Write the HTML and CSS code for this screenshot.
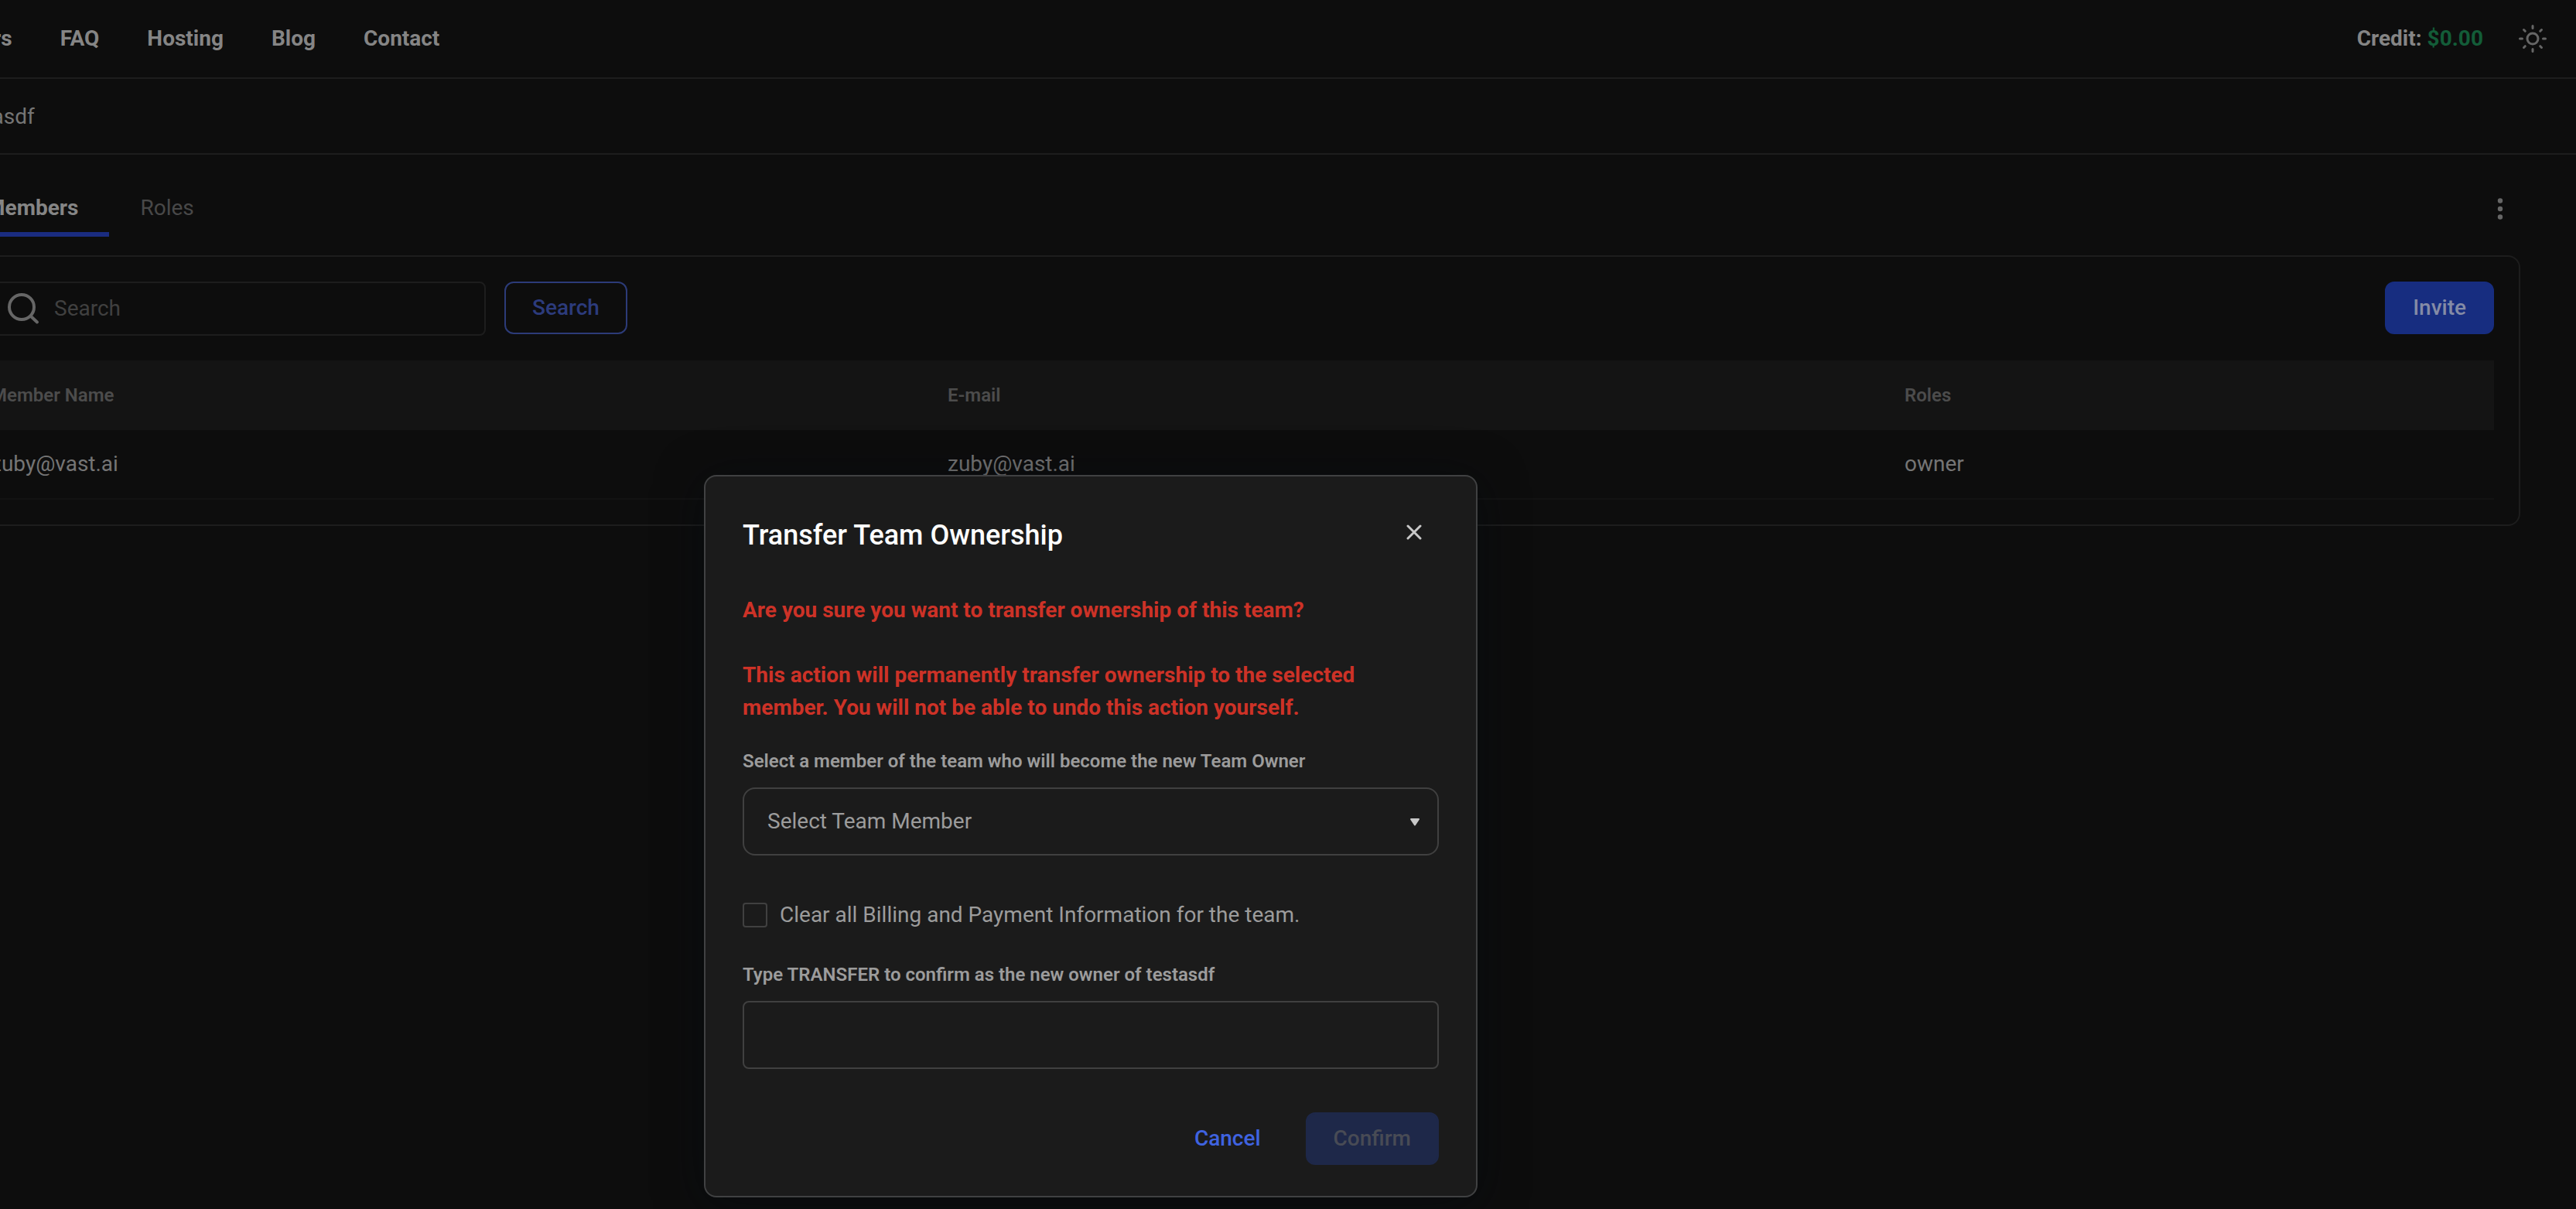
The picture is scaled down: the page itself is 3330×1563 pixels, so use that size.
FILE: index.html
```html
<!DOCTYPE html>
<html lang="en">
<head>
    <meta charset="UTF-8">
    <meta name="viewport" content="width=device-width, initial-scale=1.0">
    <title>Team Members</title>
    <link rel="stylesheet" href="styles.css">
</head>
<body>
<!-- Top bar -->
<header class="topbar">
    <nav class="nav">
        <a href="#">rs</a>
        <a href="#">FAQ</a>
        <a href="#">Hosting</a>
        <a href="#">Blog</a>
        <a href="#">Contact</a>
    </nav>
    <div class="account">
        <p class="credit">Credit: <span class="amount">$0.00</span></p>
        <button type="button" class="icon-button" aria-label="Toggle theme">
            <svg width="36" height="36" viewBox="0 0 36 36" fill="none" stroke="currentColor" stroke-width="3" stroke-linecap="round">
                <circle cx="18" cy="18" r="7"/>
                <path d="M18 1.500V4.500M18 31.500V34.500M1.500 18H4.500M31.500 18H34.500M6.500 6.500L8.300 8.300M27.700 27.700L29.500 29.500M6.500 29.500L8.300 27.700M27.700 8.300L29.500 6.500"/>
            </svg>
        </button>
    </div>
</header>

<div class="breadcrumb"><span>testasdf</span></div>

<main class="content">
    <div class="tabs-row">
        <div class="tabs">
            <a href="#" class="tab active">Members</a>
            <a href="#" class="tab">Roles</a>
        </div>
        <button type="button" class="icon-button" aria-label="More options">
            <svg width="52" height="28" viewBox="0 0 52 28" fill="currentColor">
                <circle cx="26" cy="3.500" r="3.200"/>
                <circle cx="26" cy="14" r="3.200"/>
                <circle cx="26" cy="24.500" r="3.200"/>
            </svg>
        </button>
    </div>

    <section class="card">
        <form class="toolbar">
            <label class="search-box">
                <svg width="44" height="44" viewBox="0 0 44 44" fill="none" stroke="currentColor" stroke-width="4" stroke-linecap="round">
                    <circle cx="20" cy="20" r="16"/>
                    <path d="M32 32L40 39.500"/>
                </svg>
                <input type="text" placeholder="Search" aria-label="Search members">
            </label>
            <button type="button" class="btn btn-outline">Search</button>
            <button type="button" class="btn btn-primary">Invite</button>
        </form>

        <table class="members">
            <tr>
                <th>Member Name</th>
                <th>E-mail</th>
                <th>Roles</th>
            </tr>
            <tr>
                <td>zuby@vast.ai</td>
                <td>zuby@vast.ai</td>
                <td>owner</td>
            </tr>
        </table>
    </section>
</main>

<!-- Transfer ownership dialog -->
<div class="overlay">
    <form class="modal" role="dialog" aria-labelledby="modalTitle">
        <div class="modal-header">
            <h2 id="modalTitle">Transfer Team Ownership</h2>
            <button type="button" class="icon-button close" aria-label="Close">
                <svg width="20" height="20" viewBox="0 0 20 20" fill="none" stroke="currentColor" stroke-width="3" stroke-linecap="round">
                    <path d="M2 2L18 18M18 2L2 18"/>
                </svg>
            </button>
        </div>

        <p class="warning">Are you sure you want to transfer ownership of this team?</p>
        <p class="warning">This action will permanently transfer ownership to the selected member. You will not be able to undo this action yourself.</p>

        <label class="field-label" for="member">Select a member of the team who will become the new Team Owner</label>
        <div class="select-wrap">
            <select id="member" class="field select">
                <option>Select Team Member</option>
            </select>
            <svg class="caret" width="14" height="10" viewBox="0 0 14 10" fill="currentColor" stroke="currentColor" stroke-width="2" stroke-linejoin="round">
                <path d="M2 1H12L7 8.500Z"/>
            </svg>
        </div>

        <div class="check-row">
            <input type="checkbox" id="clearBilling">
            <label for="clearBilling">Clear all Billing and Payment Information for the team.</label>
        </div>

        <label class="field-label" for="confirmText">Type TRANSFER to confirm as the new owner of testasdf</label>
        <input type="text" id="confirmText" class="field">

        <div class="modal-actions">
            <button type="button" class="btn btn-text">Cancel</button>
            <button type="button" class="btn btn-primary" disabled>Confirm</button>
        </div>
    </form>
</div>
</body>
</html>
```
FILE: styles.css
```css
* {
    box-sizing: border-box;
}

body {
    margin: 0;
    min-height: 100vh;
    overflow: hidden;
    background-color: #0d0d0d;
    color: #757575;
    font-family: Roboto, "Liberation Sans", sans-serif;
    font-size: 28px;
    line-height: 42px;
}

h2, p {
    margin: 0;
}

a {
    color: inherit;
    text-decoration: none;
}

button, input, select {
    font: inherit;
    color: inherit;
}

svg {
    display: block;
}

/* Top bar */
.topbar {
    display: flex;
    align-items: center;
    justify-content: space-between;
    height: 102px;
    padding-right: 38px;
    border-bottom: 2px solid #1d1d1d;
    color: #858585;
    font-weight: 700;
}

.nav {
    display: flex;
    gap: 62px;
    margin-left: -9px;
}

.account {
    display: flex;
    align-items: center;
    gap: 46px;
}

.amount {
    color: #135c38;
}

.icon-button {
    padding: 0;
    border: none;
    background: none;
    color: #666;
    cursor: pointer;
}

.breadcrumb {
    height: 98px;
    margin-left: -58px;
    padding-top: 28px;
    border-bottom: 2px solid #1d1d1d;
}

/* Members page, the left edge runs under the window */
.content {
    margin: 0 72px 0 -78px;
}

.tabs-row {
    display: flex;
    align-items: center;
    justify-content: space-between;
    height: 130px;
    padding-top: 10px;
}

.tabs {
    display: flex;
    padding-left: 20px;
}

.tab {
    padding: 14px 40px 10px;
    border-bottom: 6px solid transparent;
    color: #484848;
}

.tab.active {
    border-bottom-color: #1a2c80;
    color: #858585;
    font-weight: 700;
}

.card {
    padding: 32px;
    border: 2px solid #1d1d1d;
    border-radius: 16px;
}

.toolbar {
    display: flex;
    gap: 24px;
    margin-bottom: 32px;
}

.toolbar .btn-primary {
    margin-left: auto;
}

.search-box {
    display: flex;
    align-items: center;
    gap: 18px;
    width: 672px;
    height: 70px;
    padding-left: 50px;
    border: 2px solid #1d1d1d;
    border-radius: 8px;
    color: #666;
}

.search-box input {
    flex: 1;
    padding: 0;
    border: none;
    outline: none;
    background: none;
}

.search-box input::placeholder {
    color: #404040;
    opacity: 1;
}

.btn {
    height: 68px;
    padding: 0 34px;
    border: 2px solid transparent;
    border-radius: 12px;
    font-weight: 500;
    cursor: pointer;
}

.btn-outline {
    border-color: #2c3b78;
    background: none;
    color: #2c3b7c;
}

.btn-primary {
    background-color: #172d80;
    border-color: #172d80;
    color: #848ba6;
}

.btn-primary:disabled {
    background-color: #1e2849;
    border-color: #1e2849;
    color: #484b55;
}

.btn-text {
    background: none;
    color: #3f63e0;
}

.members {
    width: 100%;
    table-layout: fixed;
    border-collapse: separate;
    border-spacing: 0;
    text-align: left;
}

.members th,
.members td {
    height: 90px;
    padding: 0 32px;
}

.members th {
    background-color: #141414;
    color: #4c4c4c;
    font-size: 24px;
    font-weight: 600;
}

.members th:last-child {
    width: 794px;
}

.members td {
    border-bottom: 2px solid #131313;
}

/* Dialog */
.overlay {
    position: absolute;
    top: 614px;
    left: -510px;
    right: 0;
    display: flex;
    justify-content: center;
}

.modal {
    width: 1000px;
    padding: 48px 48px 40px;
    border: 2px solid #404142;
    border-radius: 16px;
    background-color: #1b1b1b;
    box-shadow: 0 8px 60px rgba(4, 9, 15, 0.5);
    color: #9c9c9c;
}

.modal-header {
    display: flex;
    align-items: flex-start;
    justify-content: space-between;
    margin-bottom: 52px;
    padding-top: 4px;
}

.modal-header h2 {
    color: #fff;
    font-size: 36px;
    font-weight: 500;
    line-height: 48px;
}

.close {
    padding: 10px 22px;
    color: #c8c8c8;
}

.warning {
    margin-bottom: 42px;
    color: #cd3227;
    font-weight: 700;
}

.warning + .warning {
    margin-bottom: 28px;
}

.field-label {
    display: block;
    margin-bottom: 14px;
    font-size: 24px;
    font-weight: 600;
    line-height: 40px;
}

.field {
    display: block;
    width: 100%;
    height: 88px;
    padding: 0 30px;
    border: 2px solid #404040;
    border-radius: 8px;
    outline: none;
    background: none;
}

.select-wrap {
    position: relative;
    margin-bottom: 56px;
}

.select {
    border-radius: 16px;
    appearance: none;
}

.caret {
    position: absolute;
    top: 40px;
    right: 24px;
    color: #c8c8c8;
    pointer-events: none;
}

.check-row {
    display: flex;
    align-items: center;
    gap: 16px;
    margin-bottom: 36px;
}

.check-row input {
    width: 32px;
    height: 32px;
    margin: 0;
    border: 2px solid #404040;
    border-radius: 4px;
    appearance: none;
}

.modal-actions {
    display: flex;
    justify-content: flex-end;
    gap: 22px;
    margin-top: 56px;
}
```
